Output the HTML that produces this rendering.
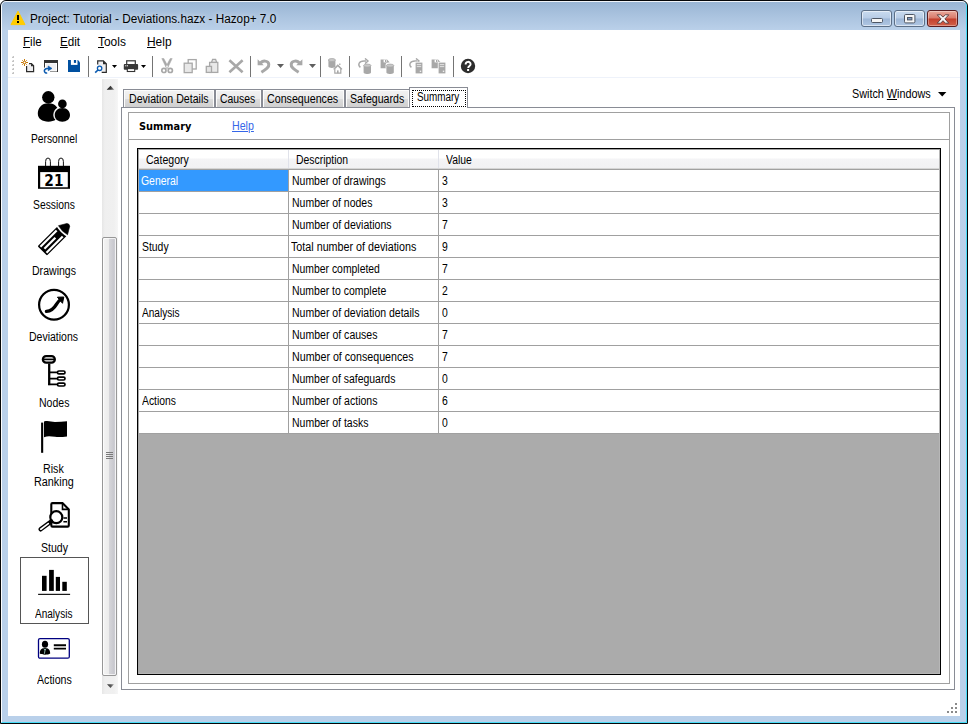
<!DOCTYPE html>
<html>
<head>
<meta charset="utf-8">
<title>Project: Tutorial - Deviations.hazx - Hazop+ 7.0</title>
<style>
*{box-sizing:border-box;margin:0;padding:0}
html,body{width:968px;height:724px;overflow:hidden;background:#fff}
body{position:relative;font-family:"Liberation Sans",sans-serif;font-size:12px;color:#000}
.abs{position:absolute}
.t{position:absolute;display:block;white-space:nowrap;font-size:12px;line-height:14px;height:14px;transform-origin:0 0}
#win{position:absolute;left:0;top:0;width:968px;height:724px;border:1px solid #050608;border-radius:6px 6px 0 0;
 background:linear-gradient(to bottom,#98b4d3 0px,#a9c2de 14px,#bbd1ea 30px,#b9d0ea 100%);overflow:hidden}
#win:before{content:"";position:absolute;left:0;top:0;right:0;bottom:0;border:1px solid;border-color:rgba(255,255,255,.85) #48ddf8 #48ddf8 rgba(255,255,255,.95);border-radius:5px 5px 0 0}
#client{position:absolute;left:8px;top:30px;width:952px;height:686px;background:#fff}
#title{text-shadow:0 0 5px rgba(255,255,255,.55),0 0 9px rgba(255,255,255,.35)}
.cap{position:absolute;top:10px;height:17px;border:1px solid #5c6f87;border-radius:3px;
 background:linear-gradient(to bottom,#c9dbef 0,#b7cce6 48%,#9db6d6 52%,#b0c7e3 100%);box-shadow:inset 0 0 0 1px rgba(255,255,255,.55)}
.cap.close{border-color:#5a1c1f;background:linear-gradient(to bottom,#e9a99b 0,#d9796a 48%,#c33f2c 52%,#d1604a 100%);box-shadow:inset 0 0 0 1px rgba(255,255,255,.35)}
.sep{position:absolute;top:56px;width:1px;height:21px;background:#747474}
.tab{position:absolute;top:89px;height:18px;border:1px solid #898c95;border-bottom:none;
 background:linear-gradient(to bottom,#f2f2f2 0,#ebebeb 50%,#dddddd 51%,#cfcfcf 100%);box-shadow:inset 1px 1px 0 #fcfcfc,inset -1px 0 0 #fcfcfc}
.row{position:absolute;left:139px;width:801px;height:22px;border-bottom:1px solid #a0a0a0;background:#fff}
.vl{position:absolute;top:170px;width:1px;height:264px;background:#a0a0a0}
u{text-decoration:underline;text-underline-offset:1px}
</style>
</head>
<body>
<div id="win"></div>
<div id="client"></div>
<svg class="abs" style="left:10px;top:10px" width="16" height="16" viewBox="0 0 16 16"><path d="M8 1.2 L15 14.6 L1 14.6 Z" fill="#ffcc00" stroke="#ffcc00" stroke-width="1" stroke-linejoin="round"/><rect x="7" y="5" width="2" height="5" fill="#000"/><rect x="7" y="11" width="2" height="2" fill="#000"/></svg>
<span id="title" class="t" style="left:30.00px;top:12px;transform:scaleX(0.9804);">Project: Tutorial - Deviations.hazx - Hazop+ 7.0</span>
<div class="cap" style="left:861px;width:31px"><svg class="abs" style="left:9px;top:7px" width="13" height="6"><rect x=".5" y=".5" width="11" height="4" rx="1" fill="#f6f6f6" stroke="#4d5664"/></svg></div>
<div class="cap" style="left:894px;width:31px"><svg class="abs" style="left:9px;top:2px" width="12" height="11"><rect x=".5" y="1.500" width="10.400" height="8.400" rx="1.200" fill="#f6f6f6" stroke="#4d5664"/><rect x="3.500" y="4.500" width="4.400" height="2.400" fill="#7f9cc4" stroke="#4d5664"/></svg></div>
<div class="cap close" style="left:927px;width:31px"><svg class="abs" style="left:8px;top:3px" width="14" height="10" viewBox="0 0 14 10"><path d="M1.200 .8h3.400l2.400 2.300 2.400-2.300h3.400l-3.900 4.100 3.900 4.300h-3.400l-2.400-2.500-2.400 2.500h-3.400l3.900-4.300z" fill="#f6f6f6" stroke="#54393a" stroke-width=".9" stroke-linejoin="round"/></svg></div>
<span class="t " style="left:22.50px;top:35px;transform:scaleX(0.9669);"><u>F</u>ile</span>
<span class="t " style="left:59.70px;top:35px;transform:scaleX(0.9720);"><u>E</u>dit</span>
<span class="t " style="left:98.30px;top:35px;transform:scaleX(0.9961);"><u>T</u>ools</span>
<span class="t " style="left:146.70px;top:35px;transform:scaleX(0.9927);"><u>H</u>elp</span>
<div class="abs" style="left:8px;top:77px;width:952px;height:1px;background:#eef2fa"></div>
<svg class="abs" style="left:12px;top:56px" width="3" height="19"><rect x="1" y="0" width="1" height="2" fill="#c4c4c4"/><rect x="0" y="1" width="2" height="1" fill="#c4c4c4"/><rect x="0" y="0" width="1" height="1" fill="#ececec"/><rect x="1" y="4" width="1" height="2" fill="#c4c4c4"/><rect x="0" y="5" width="2" height="1" fill="#c4c4c4"/><rect x="0" y="4" width="1" height="1" fill="#ececec"/><rect x="1" y="8" width="1" height="2" fill="#c4c4c4"/><rect x="0" y="9" width="2" height="1" fill="#c4c4c4"/><rect x="0" y="8" width="1" height="1" fill="#ececec"/><rect x="1" y="12" width="1" height="2" fill="#c4c4c4"/><rect x="0" y="13" width="2" height="1" fill="#c4c4c4"/><rect x="0" y="12" width="1" height="1" fill="#ececec"/><rect x="1" y="16" width="1" height="2" fill="#c4c4c4"/><rect x="0" y="17" width="2" height="1" fill="#c4c4c4"/><rect x="0" y="16" width="1" height="1" fill="#ececec"/></svg>
<svg class="abs" style="left:20px;top:58px" width="16" height="16" viewBox="0 0 16 16"><g stroke="#c87a0a" stroke-width="1"><path d="M4.500 1v7M1 4.500h7"/><path d="M2.200 2.200l4.600 4.600M6.800 2.200l-4.600 4.600" stroke-width=".9"/></g><circle cx="4.500" cy="4.500" r="1.300" fill="#fff" stroke="#c87a0a" stroke-width=".9"/><path d="M9 5.600h2.400l2.200 2.200v5.800h-7v-5.600" fill="#efeff1" stroke="#2b2b2b" stroke-width="1.200"/><path d="M11 5.400v2.800h2.800z" fill="#2b2b2b"/></svg>
<svg class="abs" style="left:43px;top:58px" width="16" height="16" viewBox="0 0 16 16"><rect x="1.500" y="2.500" width="13" height="11" fill="#efeff1" stroke="#333" stroke-width="1"/><rect x="2.500" y="5" width="11" height="8" fill="none" stroke="#fff" stroke-width="1"/><rect x="1" y="2" width="14" height="3" fill="#333"/><rect x="0" y="9.600" width="7" height="6.400" fill="#fff"/><path d="M4.200 15c-3.400.4-4-3.800-.4-4.600h3" fill="none" stroke="#0a5ab0" stroke-width="1.500"/><path d="M5.200 8l3.800 2.400-3.800 2.400z" fill="#0a5ab0" stroke="#0a5ab0" stroke-width=".6" stroke-linejoin="round"/></svg>
<svg class="abs" style="left:66px;top:58px" width="16" height="16" viewBox="0 0 16 16"><path d="M2 2h10l2 2.400v9.600h-12z" fill="#0050a0"/><rect x="4.900" y="2" width="6.600" height="4.900" fill="#fff"/><rect x="7.900" y="2" width="2.200" height="2.900" fill="#0050a0"/></svg>
<svg class="abs" style="left:93px;top:58px" width="16" height="16" viewBox="0 0 16 16"><path d="M4.700 6.600v-3.800h5.600l3 3v8.600h-4.600" fill="#efeff1" stroke="#2b2b2b" stroke-width="1.200"/><path d="M10 2.600v3.600h3.600z" fill="#2b2b2b"/><circle cx="6.600" cy="10.300" r="2.200" fill="#fff" stroke="#0a5ab0" stroke-width="1.300"/><path d="M5 12l-2.800 2.600" stroke="#0a5ab0" stroke-width="1.600"/></svg>
<svg class="abs" style="left:112px;top:65px" width="5" height="3"><path d="M0 0h5l-2.500 3z" fill="#000"/></svg>
<svg class="abs" style="left:123px;top:58px" width="16" height="16" viewBox="0 0 16 16"><rect x="3.700" y="2.800" width="8.600" height="4" fill="#fff" stroke="#333" stroke-width="1.200"/><rect x="0.800" y="6.100" width="14.300" height="5.700" rx=".8" fill="#383838"/><rect x="4.300" y="10.600" width="7.400" height="2.900" fill="#fff" stroke="#333" stroke-width="1.100"/><rect x="2.200" y="7.300" width="1.100" height="1" fill="#fff"/><rect x="3.900" y="7.300" width="1.100" height="1" fill="#fff"/></svg>
<svg class="abs" style="left:141px;top:65px" width="5" height="3"><path d="M0 0h5l-2.500 3z" fill="#000"/></svg>
<svg class="abs" style="left:159px;top:58px" width="16" height="16" viewBox="0 0 16 16"><path d="M2.800 .5l2 0 4.600 8.600-1.800 1.500zM13.200 .5l-2 0-4.600 8.600 1.800 1.500z" fill="#a8a8a8" stroke="#a8a8a8" stroke-width=".5"/><g fill="none" stroke="#a8a8a8" stroke-width="1.700"><circle cx="4.900" cy="12.400" r="2.100"/><circle cx="11.300" cy="12.400" r="2.100"/></g></svg>
<svg class="abs" style="left:182px;top:58px" width="16" height="16" viewBox="0 0 16 16"><g stroke="#a8a8a8" stroke-width="1.300"><rect x="6.200" y="1.600" width="8" height="9.400" fill="#fff"/><rect x="2.200" y="5.200" width="8" height="9.400" fill="#e8e8e8"/></g></svg>
<svg class="abs" style="left:205px;top:58px" width="16" height="16" viewBox="0 0 16 16"><g stroke="#a8a8a8" stroke-width="1.300"><path d="M6.600 4.200l1-2.800h3l1 2.800" fill="#e6e6e6"/><rect x="4.600" y="4.400" width="8.200" height="10" fill="#e9e9e9"/><rect x="1.300" y="8.400" width="5.200" height="6" fill="#e4e4e4"/></g></svg>
<svg class="abs" style="left:228px;top:58px" width="16" height="16" viewBox="0 0 16 16"><path d="M1.400 2.200l13.200 12M14.600 2.200l-13.200 12" stroke="#a8a8a8" stroke-width="2.600"/></svg>
<svg class="abs" style="left:256px;top:58px" width="16" height="16" viewBox="0 0 16 16"><path d="M1.600 1.200v6h6.200z" fill="#a8a8a8"/><path d="M4.200 5.600c2.400-3.600 8-3.200 8.600 0.600c.5 3-2.800 5.200-7.400 8" fill="none" stroke="#a8a8a8" stroke-width="3"/></svg>
<svg class="abs" style="left:277px;top:64px" width="7" height="4"><path d="M0 0h7l-3.500 4z" fill="#5f5f5f"/></svg>
<svg class="abs" style="left:288px;top:58px" width="16" height="16" viewBox="0 0 16 16"><path d="M14.400 1.200v6h-6.200z" fill="#a8a8a8"/><path d="M11.800 5.600c-2.400-3.600-8-3.200-8.600 0.600c-.5 3 2.800 5.200 7.400 8" fill="none" stroke="#a8a8a8" stroke-width="3"/></svg>
<svg class="abs" style="left:309px;top:64px" width="7" height="4"><path d="M0 0h7l-3.500 4z" fill="#5f5f5f"/></svg>
<svg class="abs" style="left:327px;top:58px" width="16" height="16" viewBox="0 0 16 16"><path d="M1.4 2.0v6.6c0 1.900 7 1.900 7 0v-6.6z" fill="#a8a8a8"/><ellipse cx="4.9" cy="2.0" rx="3.5" ry="1.500" fill="#c8c8c8" stroke="#a8a8a8" stroke-width=".800"/><path d="M6.600 11.400l4.200-4.200 4.200 4.200M12.800 7v-1.600" fill="none" stroke="#a8a8a8" stroke-width="1.300"/><path d="M7.800 10.600v4.600h6v-4.600l-3-3z" fill="#fff" stroke="#a8a8a8" stroke-width="1.200"/><rect x="10" y="12.400" width="1.600" height="2.800" fill="#a8a8a8"/></svg>
<svg class="abs" style="left:357px;top:58px" width="16" height="16" viewBox="0 0 16 16"><path d="M3.400 9.400c-3-2.600-1.600-6.400 3.600-6.400h2" fill="none" stroke="#a8a8a8" stroke-width="1.400"/><path d="M8 0.400l3 2.600-3 2.600" fill="none" stroke="#a8a8a8" stroke-width="1.400"/><path d="M6.6 7.6v7.0c0 1.900 7.4 1.900 7.4 0v-7.0z" fill="#a8a8a8"/><ellipse cx="10.3" cy="7.6" rx="3.7" ry="1.500" fill="#c8c8c8" stroke="#a8a8a8" stroke-width=".800"/></svg>
<svg class="abs" style="left:380px;top:58px" width="16" height="16" viewBox="0 0 16 16"><path d="M0.600 1.600h6.400l2.600 2.600v6h-9z" fill="#a8a8a8"/><rect x="3.600" y="1.600" width="3" height="2.800" fill="#fff"/><rect x="5" y="2" width="1" height="2" fill="#a8a8a8"/><path d="M5.600 6.600c0-3 8.800-3 8.800 0v4h-8.800z" fill="#fff"/><path d="M6.4 7.6v7.0c0 1.900 7.4 1.900 7.4 0v-7.0z" fill="#a8a8a8"/><ellipse cx="10.1" cy="7.6" rx="3.7" ry="1.500" fill="#c8c8c8" stroke="#a8a8a8" stroke-width=".800"/></svg>
<svg class="abs" style="left:408px;top:58px" width="16" height="16" viewBox="0 0 16 16"><path d="M3.400 9.400c-3-2.600-1.600-6.400 3.600-6.400h2" fill="none" stroke="#a8a8a8" stroke-width="1.400"/><path d="M8 0.400l3 2.600-3 2.600" fill="none" stroke="#a8a8a8" stroke-width="1.400"/><rect x="6.800" y="3.800" width="8.400" height="12" fill="#fff"/><rect x="7.600" y="4.600" width="6.800" height="10.800" fill="#a8a8a8"/><path d="M8.800 6.600h4.400M8.800 8.600h4.400" stroke="#e2e2e2" stroke-width="1"/><rect x="11.800" y="12.600" width="1.400" height="1.400" fill="#eee"/></svg>
<svg class="abs" style="left:431px;top:58px" width="16" height="16" viewBox="0 0 16 16"><path d="M0.600 1.600h6.400l2.600 2.600v6h-9z" fill="#a8a8a8"/><rect x="3.600" y="1.600" width="3" height="2.800" fill="#fff"/><rect x="5" y="2" width="1" height="2" fill="#a8a8a8"/><rect x="6.800" y="3.800" width="8.400" height="12" fill="#fff"/><rect x="7.600" y="4.600" width="6.800" height="10.800" fill="#a8a8a8"/><path d="M8.800 6.600h4.400M8.800 8.600h4.400" stroke="#e2e2e2" stroke-width="1"/><rect x="11.800" y="12.600" width="1.400" height="1.400" fill="#eee"/></svg>
<svg class="abs" style="left:460px;top:58px" width="16" height="16" viewBox="0 0 16 16"><circle cx="8" cy="8" r="7.200" fill="#2d2d2d"/><path d="M5.600 6.400c0-3.400 5-3.400 5 -.2c0 1.800-2.400 1.800-2.400 3.800" fill="none" stroke="#fff" stroke-width="1.900"/><rect x="7.100" y="11" width="2" height="2" fill="#fff"/></svg>
<div class="sep" style="left:88px"></div>
<div class="sep" style="left:152px"></div>
<div class="sep" style="left:250px"></div>
<div class="sep" style="left:320px"></div>
<div class="sep" style="left:349px"></div>
<div class="sep" style="left:401px"></div>
<div class="sep" style="left:453px"></div>
<div class="abs" style="left:102px;top:79px;width:16px;height:615px;background:linear-gradient(to right,#e6e6e6 0,#efefef 3px,#f0f0f0 12px,#f6f6f6 16px)"></div>
<div class="abs" style="left:102px;top:237px;width:15px;height:439px;border:1px solid #979797;border-radius:2px;background:linear-gradient(to right,#f4f4f4 0,#ececec 45%,#d5d5d9 50%,#c8c8ce 85%,#dcdce0 100%);box-shadow:inset 0 0 0 1px rgba(255,255,255,.7)"></div>
<svg class="abs" style="left:106px;top:85px" width="9" height="5"><defs><linearGradient id="ag" x1="0" y1="0" x2="1" y2="0"><stop offset="0" stop-color="#1a1a1a"/><stop offset=".55" stop-color="#3c3c3c"/><stop offset="1" stop-color="#9a9a9a"/></linearGradient></defs><path d="M0.700 4.700L4.500 0.800L8.300 4.700z" fill="url(#ag)"/></svg>
<svg class="abs" style="left:106px;top:684px" width="9" height="5"><path d="M1 0.300L4.500 4L8 0.300z" fill="url(#ag)" opacity=".85"/></svg>
<svg class="abs" style="left:106px;top:452px" width="8" height="8"><path d="M0 .500h7M0 2.500h7M0 4.500h7M0 6.500h7" stroke="#7a7a7a" stroke-width="1"/></svg>
<svg class="abs" style="left:34px;top:90px" width="40" height="36" viewBox="0 0 40 36"><circle cx="14.300" cy="7.300" r="6.200"/><path d="M14.400 13.200c7 0 10.600 5 10.600 10.400c0 5.400-4.600 8.100-10.600 8.100s-10.600-2.700-10.600-8.100c0-5.400 3.600-10.400 10.600-10.400z"/><circle cx="28.400" cy="13.900" r="5.300" fill="#fff"/><path d="M28.350 16.800c5.800 0 8.700 4 8.700 8.200c0 4.600-3.800 6.700-8.700 6.700s-8.700-2.100-8.700-6.700c0-4.200 2.900-8.200 8.700-8.200z" fill="#fff" stroke="#fff" stroke-width=".6"/><circle cx="28.400" cy="13.900" r="4.300"/><path d="M28.350 17.900c5 0 7.650 3.400 7.650 7.200c0 4.200-3.300 6.600-7.650 6.600s-7.650-2.400-7.650-6.600c0-3.800 2.650-7.200 7.650-7.200z"/></svg>
<svg class="abs" style="left:34px;top:156px" width="40" height="36" viewBox="0 0 40 36"><path d="M11.600 11v-5.500a2.400 3.500 0 0 1 4.800 0v5.500" fill="none" stroke="#111" stroke-width="1"/><path d="M24.600 11v-5.500a2.400 3.500 0 0 1 4.800 0v5.500" fill="none" stroke="#111" stroke-width="1"/><rect x="4" y="9.800" width="32" height="23" fill="#000"/><rect x="6.200" y="16.100" width="27.600" height="15.200" fill="#fff"/><text transform="translate(19.900 29.600) scale(.86 1)" text-anchor="middle" font-family="DejaVu Sans,Liberation Sans,sans-serif" font-weight="bold" font-size="16px" fill="#000">21</text></svg>
<svg class="abs" style="left:34px;top:222px" width="40" height="36" viewBox="0 0 40 36"><g transform="translate(8.300 28.900) rotate(-45)"><rect x="0" y="-6.600" width="28" height="13.200" rx="1" fill="#000"/><rect x="1.600" y="-5.400" width="23" height="2.200" fill="#fff"/><rect x="3" y="-1.100" width="15.500" height="2.200" fill="#fff"/><rect x="1.600" y="3.200" width="23" height="2.200" fill="#fff"/><path d="M28.200 -7.400q-2 7.400 0 14.800" fill="none" stroke="#fff" stroke-width="1.500"/><path d="M29.300 -6.400q-1.600 6.400 0 12.800l7.400-4.400q1.800-2 0-4z" fill="#000" stroke="#000" stroke-width=".6" stroke-linejoin="round"/></g></svg>
<svg class="abs" style="left:34px;top:288px" width="40" height="36" viewBox="0 0 40 36"><circle cx="20" cy="16.800" r="14.900" fill="none" stroke="#000" stroke-width="2.200"/><path d="M12.400 23.300c5.600-.4 7.800-3.200 10-7c1.200-2 2.400-3.600 4.200-4.800" fill="none" stroke="#000" stroke-width="3.300" stroke-linecap="round"/><path d="M23.400 9.200l6.400-.2-1.300 6.300z" fill="#000" stroke="#000" stroke-width="1" stroke-linejoin="round"/></svg>
<svg class="abs" style="left:34px;top:354px" width="40" height="36" viewBox="0 0 40 36"><rect x="8.900" y="2.100" width="11.900" height="6.600" rx="3.200" fill="#fff" stroke="#000" stroke-width="2.300"/><path d="M9 5.400h12" stroke="#000" stroke-width="1.700"/><path d="M15.200 9.500v21.600" fill="none" stroke="#000" stroke-width="2.300"/><path d="M15 18.400h9M15 24.700h9M14.100 30.300h10" fill="none" stroke="#000" stroke-width="1.700"/><g fill="#fff" stroke="#000" stroke-width="1.700"><rect x="23.500" y="17" width="7.500" height="2.800" rx="1.400"/><rect x="23.500" y="23.200" width="7.500" height="2.800" rx="1.400"/><rect x="23.500" y="29.200" width="7.500" height="2.800" rx="1.400"/></g></svg>
<svg class="abs" style="left:34px;top:420px" width="40" height="36" viewBox="0 0 40 36"><rect x="7.100" y="2.600" width="2.100" height="30.200" fill="#000"/><path d="M10 1.600c4-1.400 7 .4 11 .4s8-.6 12-.8v15.200c-4 .4-8 .8-12 .4s-7-1.200-11 .4z" fill="#000"/></svg>
<svg class="abs" style="left:34px;top:499px" width="40" height="36" viewBox="0 0 40 36"><path d="M18.500 4.100h10l6.300 6.300v16a1.200 1.200 0 0 1-1.200 1.200h-15.100a1.200 1.200 0 0 1-1.200-1.200v-21.100a1.200 1.200 0 0 1 1.200-1.200z" fill="#fff" stroke="#000" stroke-width="2.100"/><path d="M28.500 4.100v6.300h6.300" fill="none" stroke="#000" stroke-width="1.600"/><path d="M29.400 19h3.600M29.400 22.800h3.600" stroke="#000" stroke-width="1.500"/><circle cx="22.300" cy="18.200" r="6" fill="#fff" stroke="#000" stroke-width="2.200"/><path d="M17.200 22.400l-10.600 7.900" stroke="#000" stroke-width="4.400" stroke-linecap="round"/><path d="M14.300 24.600l-7.500 5.600" stroke="#fff" stroke-width="1.700" stroke-linecap="round"/></svg>
<div class="abs" style="left:20px;top:557px;width:69px;height:67px;border:1px solid #555"></div>
<svg class="abs" style="left:34px;top:565px" width="40" height="36" viewBox="0 0 40 36"><rect x="8" y="10.800" width="4.600" height="15.100"/><rect x="15.100" y="4.900" width="4.700" height="21"/><rect x="21.800" y="11.900" width="4.200" height="14"/><rect x="28.300" y="16.800" width="4.500" height="9.100"/><rect x="4.100" y="28.800" width="32" height="1.100"/></svg>
<svg class="abs" style="left:34px;top:631px" width="40" height="36" viewBox="0 0 40 36"><rect x="4.500" y="7.600" width="30.800" height="19.600" rx="1.500" fill="#fff" stroke="#000080" stroke-width="1.300"/><ellipse cx="11" cy="13.300" rx="3.100" ry="3.500"/><path d="M5.800 22.500c0-4 2-5.600 5.200-5.600s5.200 1.600 5.200 5.600c-2 1.600-8.400 1.600-10.400 0z"/><path d="M9.800 17.500l1.200 1.800 1.200-1.800M11 19.300l-.6 3.500" stroke="#cfe" stroke-width=".7" fill="none"/><path d="M19.800 14.200h12.200M19.800 17.600h12.200" stroke="#000" stroke-width="1.900"/></svg>
<span class="t " style="left:31.00px;top:132px;transform:scaleX(0.8549);">Personnel</span>
<span class="t " style="left:32.80px;top:198px;transform:scaleX(0.8605);">Sessions</span>
<span class="t " style="left:31.60px;top:264px;transform:scaleX(0.8796);">Drawings</span>
<span class="t " style="left:29.10px;top:330px;transform:scaleX(0.8745);">Deviations</span>
<span class="t " style="left:39.00px;top:396px;transform:scaleX(0.8763);">Nodes</span>
<span class="t " style="left:42.70px;top:462px;transform:scaleX(0.8908);">Risk</span>
<span class="t " style="left:33.80px;top:475px;transform:scaleX(0.9017);">Ranking</span>
<span class="t " style="left:40.70px;top:541px;transform:scaleX(0.8798);">Study</span>
<span class="t " style="left:34.80px;top:607px;transform:scaleX(0.8371);">Analysis</span>
<span class="t " style="left:36.60px;top:673px;transform:scaleX(0.8844);">Actions</span>
<div class="abs" style="left:121px;top:107px;width:834px;height:583px;border:1px solid #898c95;background:#fff"></div>
<div class="tab" style="left:123px;width:92px"></div>
<span class="t " style="left:128.80px;top:92px;transform:scaleX(0.8841);">Deviation Details</span>
<div class="tab" style="left:215px;width:47px"></div>
<span class="t " style="left:220.10px;top:92px;transform:scaleX(0.8675);">Causes</span>
<div class="tab" style="left:262px;width:83px"></div>
<span class="t " style="left:267.20px;top:92px;transform:scaleX(0.8893);">Consequences</span>
<div class="tab" style="left:345px;width:65px"></div>
<span class="t " style="left:350.30px;top:92px;transform:scaleX(0.8830);">Safeguards</span>
<div class="abs" style="left:409px;top:87px;width:59px;height:21px;border:1px solid #898c95;border-bottom:none;background:#fff"></div>
<div class="abs" style="left:412px;top:90px;width:54px;height:17px;border:1px dotted #000"></div>
<span class="t " style="left:416.90px;top:90px;transform:scaleX(0.8239);">Summary</span>
<span class="t " style="left:851.70px;top:87px;transform:scaleX(0.9009);">Switch <u>W</u>indows</span>
<svg class="abs" style="left:938px;top:92px" width="9" height="5"><path d="M0 0h8.400l-4.200 4.600z" fill="#000"/></svg>
<div class="abs" style="left:128px;top:112px;width:822px;height:572px;border:1px solid #a0a0a0;background:#fff"></div>
<div class="abs" style="left:129px;top:139px;width:820px;height:1px;background:#a0a0a0"></div>
<span class="t " style="left:138.50px;top:120px;transform:scaleX(0.8928);font-family:'DejaVu Sans','Liberation Sans',sans-serif;font-weight:bold;font-size:11px">Summary</span>
<span class="t " style="left:231.90px;top:119px;transform:scaleX(0.8874);color:#3566e8;text-decoration:underline">Help</span>
<div class="abs" style="left:137px;top:148px;width:804px;height:527px;background:#ababab;border:1px solid #000;box-shadow:inset 1px 1px 0 #a6a6a6"></div>
<div class="abs" style="left:139px;top:150px;width:801px;height:20px;background:linear-gradient(to bottom,#fff 0,#fff 8px,#f4f4f6 9px,#f1f1f3 17px,#f1f1f3 18px,#d5d5d5 18px,#d5d5d5 19px,#a0a0a0 19px,#a0a0a0 20px)"></div>
<div class="abs" style="left:288px;top:150px;width:1px;height:18px;background:#e0e2ea"></div><div class="abs" style="left:438px;top:150px;width:1px;height:18px;background:#e0e2ea"></div>
<span class="t " style="left:146.20px;top:153px;transform:scaleX(0.8790);">Category</span>
<span class="t " style="left:296.20px;top:153px;transform:scaleX(0.8664);">Description</span>
<span class="t " style="left:445.90px;top:153px;transform:scaleX(0.8650);">Value</span>
<div class="row" style="top:170px"></div>
<div class="abs" style="left:139px;top:170px;width:149px;height:21px;background:#3399ff"></div>
<span class="t " style="left:141.40px;top:174px;transform:scaleX(0.8691);color:#fff">General</span>
<span class="t " style="left:292.00px;top:174px;transform:scaleX(0.8726);">Number of drawings</span>
<span class="t " style="left:442.40px;top:174px;transform:scaleX(0.8650);">3</span>
<div class="row" style="top:192px"></div>
<span class="t " style="left:292.00px;top:196px;transform:scaleX(0.8734);">Number of nodes</span>
<span class="t " style="left:442.40px;top:196px;transform:scaleX(0.8650);">3</span>
<div class="row" style="top:214px"></div>
<span class="t " style="left:292.00px;top:218px;transform:scaleX(0.8775);">Number of deviations</span>
<span class="t " style="left:442.40px;top:218px;transform:scaleX(0.8650);">7</span>
<div class="row" style="top:236px"></div>
<span class="t " style="left:141.70px;top:240px;transform:scaleX(0.8667);">Study</span>
<span class="t " style="left:291.40px;top:240px;transform:scaleX(0.8945);">Total number of deviations</span>
<span class="t " style="left:442.40px;top:240px;transform:scaleX(0.8650);">9</span>
<div class="row" style="top:258px"></div>
<span class="t " style="left:292.00px;top:262px;transform:scaleX(0.8670);">Number completed</span>
<span class="t " style="left:442.40px;top:262px;transform:scaleX(0.8650);">7</span>
<div class="row" style="top:280px"></div>
<span class="t " style="left:292.00px;top:284px;transform:scaleX(0.8718);">Number to complete</span>
<span class="t " style="left:442.40px;top:284px;transform:scaleX(0.8650);">2</span>
<div class="row" style="top:302px"></div>
<span class="t " style="left:141.70px;top:306px;transform:scaleX(0.8415);">Analysis</span>
<span class="t " style="left:292.00px;top:306px;transform:scaleX(0.8761);">Number of deviation details</span>
<span class="t " style="left:442.40px;top:306px;transform:scaleX(0.8650);">0</span>
<div class="row" style="top:324px"></div>
<span class="t " style="left:292.00px;top:328px;transform:scaleX(0.8780);">Number of causes</span>
<span class="t " style="left:442.40px;top:328px;transform:scaleX(0.8650);">7</span>
<div class="row" style="top:346px"></div>
<span class="t " style="left:292.00px;top:350px;transform:scaleX(0.8892);">Number of consequences</span>
<span class="t " style="left:442.40px;top:350px;transform:scaleX(0.8650);">7</span>
<div class="row" style="top:368px"></div>
<span class="t " style="left:292.00px;top:372px;transform:scaleX(0.8709);">Number of safeguards</span>
<span class="t " style="left:442.40px;top:372px;transform:scaleX(0.8650);">0</span>
<div class="row" style="top:390px"></div>
<span class="t " style="left:141.70px;top:394px;transform:scaleX(0.8640);">Actions</span>
<span class="t " style="left:292.00px;top:394px;transform:scaleX(0.8780);">Number of actions</span>
<span class="t " style="left:442.40px;top:394px;transform:scaleX(0.8650);">6</span>
<div class="row" style="top:412px"></div>
<span class="t " style="left:292.00px;top:416px;transform:scaleX(0.8745);">Number of tasks</span>
<span class="t " style="left:442.40px;top:416px;transform:scaleX(0.8650);">0</span>
<div class="abs" style="left:939px;top:150px;width:1px;height:524px;background:#b7b7b7"></div><div class="abs" style="left:139px;top:673px;width:801px;height:1px;background:#b7b7b7"></div>
<div class="vl" style="left:288px"></div><div class="vl" style="left:438px"></div>
<svg class="abs" style="left:947px;top:703px" width="11" height="11"><rect x="8" y="0" width="2" height="2" fill="#8a8a8a"/><rect x="4" y="4" width="2" height="2" fill="#8a8a8a"/><rect x="8" y="4" width="2" height="2" fill="#8a8a8a"/><rect x="0" y="8" width="2" height="2" fill="#8a8a8a"/><rect x="4" y="8" width="2" height="2" fill="#8a8a8a"/><rect x="8" y="8" width="2" height="2" fill="#8a8a8a"/></svg>
</body>
</html>
